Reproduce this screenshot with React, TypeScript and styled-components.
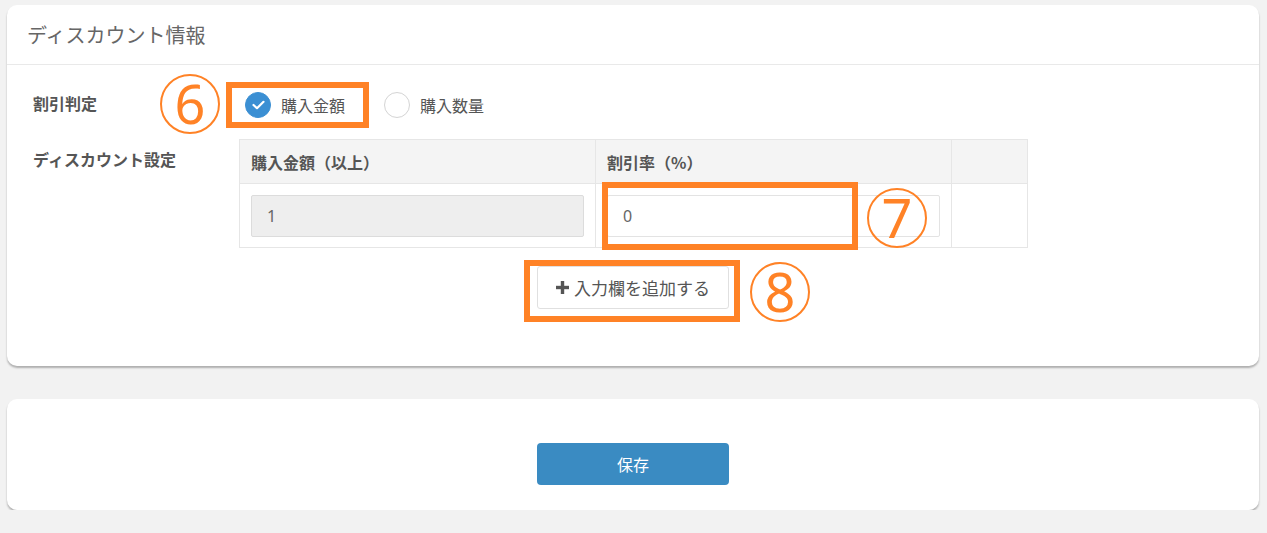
import React from 'react';
import styled, { createGlobalStyle } from 'styled-components';

const GlobalStyle = createGlobalStyle`
    html, body {
        margin: 0;
        padding: 0;
        background: #f2f2f2;
    }
    body {
        font-family: 'Noto Sans CJK JP', 'Noto Sans', sans-serif;
        color: #555;
    }
`;

const ORANGE = '#ff8226';

const Page = styled.div`
    box-sizing: border-box;
    padding: 5px 8px 0 7px;
    display: flex;
    flex-direction: column;
    gap: 33px;
`;

const Card = styled.section`
    background: #fff;
    border-radius: 10px;
    box-shadow: 0 2px 2px rgba(0, 0, 0, 0.28);
`;

const CardHeader = styled.div`
    height: 60px;
    box-sizing: border-box;
    display: flex;
    align-items: center;
    padding-left: 20px;
    border-bottom: 1px solid #e9e9e9;
    font-size: 20px;
    color: #666;
`;

const CardBody = styled.div`
    padding: 20px 26px 57px;
`;

const FormRow = styled.div`
    display: grid;
    grid-template-columns: 206px 1fr;
    margin-bottom: 14px;
`;

const Label = styled.div<{ $top: number }>`
    font-size: 16px;
    font-weight: bold;
    color: #555;
    padding-top: ${(p) => p.$top}px;
    line-height: 24px;
`;

const RadioGroup = styled.div`
    position: relative;
    display: flex;
    align-items: center;
    gap: 8px;
    height: 40px;
    margin-left: -7px;
`;

const Option = styled.label<{ $marked?: boolean }>`
    display: inline-flex;
    align-items: center;
    gap: 10px;
    height: 34px;
    padding: 0 18px 0 13px;
    font-size: 16px;
    color: #555;
    outline: ${(p) => (p.$marked ? `6px solid ${ORANGE}` : 'none')};
`;

const Radio = styled.span<{ $checked?: boolean }>`
    box-sizing: border-box;
    width: 26px;
    height: 26px;
    border-radius: 50%;
    display: inline-flex;
    align-items: center;
    justify-content: center;
    background: ${(p) => (p.$checked ? '#3b8fd3' : '#fff')};
    border: 1px solid ${(p) => (p.$checked ? '#3b8fd3' : '#d4d4d4')};
`;

const Marker = styled.span<{ $left: number; $top: number }>`
    position: absolute;
    left: ${(p) => p.$left}px;
    top: ${(p) => p.$top}px;
    box-sizing: border-box;
    width: 60px;
    height: 60px;
    border: 2px solid ${ORANGE};
    border-radius: 50%;
    display: flex;
    align-items: center;
    justify-content: center;
    color: ${ORANGE};
    font-family: 'Noto Sans', sans-serif;
    font-size: 54px;
    line-height: 1;
    padding-bottom: 2px;
    pointer-events: none;
`;

const Frame = styled.span<{ $left: number; $top: number; $w: number; $h: number }>`
    position: absolute;
    left: ${(p) => p.$left}px;
    top: ${(p) => p.$top}px;
    width: ${(p) => p.$w}px;
    height: ${(p) => p.$h}px;
    box-sizing: border-box;
    border: 6px solid ${ORANGE};
    pointer-events: none;
`;

const Table = styled.table`
    width: 788px;
    border-collapse: collapse;
    table-layout: fixed;
`;

const Th = styled.th<{ $w: number }>`
    width: ${(p) => p.$w}px;
    height: 44px;
    box-sizing: border-box;
    background: #f4f4f4;
    border: 1px solid #e6e6e6;
    text-align: left;
    padding: 0 11px;
    font-size: 16px;
    font-weight: bold;
    color: #555;
`;

const Td = styled.td`
    position: relative;
    height: 64px;
    box-sizing: border-box;
    border: 1px solid #e6e6e6;
    padding: 0 11px;
`;

const Input = styled.input<{ $readOnly?: boolean }>`
    display: block;
    width: 100%;
    height: 42px;
    box-sizing: border-box;
    padding: 0 15px;
    border: 1px solid ${(p) => (p.$readOnly ? '#dcdcdc' : '#e3e3e3')};
    border-radius: 2px;
    background: ${(p) => (p.$readOnly ? '#eeeeee' : '#fff')};
    font-family: 'Noto Sans', sans-serif;
    font-size: 16px;
    color: #666;
    outline: none;
`;

const AddRow = styled.div`
    display: flex;
    justify-content: center;
    padding-top: 4px;
`;

const AddWrap = styled.div`
    position: relative;
`;

const AddButton = styled.button`
    width: 192px;
    height: 43px;
    box-sizing: border-box;
    display: flex;
    align-items: center;
    justify-content: center;
    gap: 5px;
    background: #fff;
    border: 1px solid #e0e0e0;
    border-radius: 3px;
    font-family: 'Noto Sans CJK JP', sans-serif;
    font-size: 17px;
    color: #555;
    padding: 0;
`;

const SaveBody = styled.div`
    display: flex;
    justify-content: center;
    padding: 44px 0 25px;
`;

const SaveButton = styled.button`
    width: 192px;
    height: 42px;
    border: none;
    border-radius: 4px;
    background: #3a8bc2;
    color: #fff;
    font-family: 'Noto Sans CJK JP', sans-serif;
    font-size: 16px;
`;

function Check() {
    return (
        <svg width="13" height="10" viewBox="0 0 13 10">
            <path d="M1.5 5 L5 8.2 L11.5 1.8" fill="none" stroke="#fff" strokeWidth="2.2" strokeLinecap="round" strokeLinejoin="round" />
        </svg>
    );
}

function PlusIcon() {
    return (
        <svg width="13" height="13" viewBox="0 0 13 13">
            <rect x="4.8" y="0" width="3.4" height="13" fill="#555" />
            <rect x="0" y="4.8" width="13" height="3.4" fill="#555" />
        </svg>
    );
}

export default function App() {
    return (
        <>
            <GlobalStyle />
            <Page>
                <Card>
                    <CardHeader>ディスカウント情報</CardHeader>
                    <CardBody>
                        <FormRow>
                            <Label $top={6}>割引判定</Label>
                            <RadioGroup>
                                <Marker $left={-72} $top={-11}>6</Marker>
                                <Option $marked>
                                    <Radio $checked><Check /></Radio>
                                    購入金額
                                </Option>
                                <Option>
                                    <Radio />
                                    購入数量
                                </Option>
                            </RadioGroup>
                        </FormRow>
                        <FormRow>
                            <Label $top={8}>ディスカウント設定</Label>
                            <div>
                                <Table>
                                    <thead>
                                        <tr>
                                            <Th $w={356}>購入金額（以上）</Th>
                                            <Th $w={356}>割引率（%）</Th>
                                            <Th $w={76}></Th>
                                        </tr>
                                    </thead>
                                    <tbody>
                                        <tr>
                                            <Td><Input $readOnly readOnly value="1" /></Td>
                                            <Td>
                                                <Input defaultValue="0" />
                                                <Frame $left={6} $top={-2} $w={256} $h={68} />
                                                <Marker $left={271} $top={4}>7</Marker>
                                            </Td>
                                            <Td></Td>
                                        </tr>
                                    </tbody>
                                </Table>
                            </div>
                        </FormRow>
                        <AddRow>
                            <AddWrap>
                                <AddButton><PlusIcon />入力欄を追加する</AddButton>
                                <Frame $left={-13} $top={-6} $w={216} $h={62} />
                                <Marker $left={213} $top={-4}>8</Marker>
                            </AddWrap>
                        </AddRow>
                    </CardBody>
                </Card>
                <Card>
                    <SaveBody>
                        <SaveButton>保存</SaveButton>
                    </SaveBody>
                </Card>
            </Page>
        </>
    );
}
